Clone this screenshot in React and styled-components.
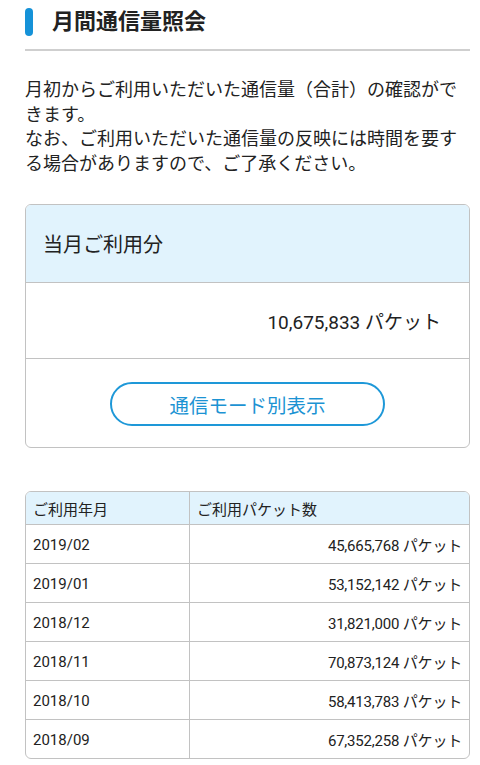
import React from 'react'
import styled, { createGlobalStyle } from 'styled-components'

const GlobalStyle = createGlobalStyle`
  body {
    margin: 0;
    background: #fff;
    font-family: Roboto, "Noto Sans CJK JP", sans-serif;
    color: #222;
  }
`

const Page = styled.div`
  padding: 0 10px 0 25px;
  width: 480px;
  box-sizing: border-box;
`

const Title = styled.h1`
  display: flex;
  align-items: center;
  gap: 19px;
  margin: 0;
  padding: 7px 0 13px;
  font-size: 22px;
  font-weight: 700;
  line-height: 29px;
  border-bottom: 2px solid #cfcfcf;

  &::before {
    content: '';
    width: 8px;
    height: 28px;
    border-radius: 4px;
    background: #1592d8;
  }
`

const Lead = styled.p`
  margin: 27px 0 0;
  font-size: 18px;
  line-height: 24.5px;
`

const Card = styled.section`
  margin-top: 28px;
  border: 1px solid #c2c2c2;
  border-radius: 6px;
  overflow: hidden;
`

const CardHead = styled.div`
  background: #e1f3fd;
  padding: 0 17px;
  height: 77px;
  display: flex;
  align-items: center;
  font-size: 20px;
  border-bottom: 1px solid #c2c2c2;
`

const Amount = styled.div`
  height: 75px;
  display: flex;
  align-items: center;
  justify-content: flex-end;
  padding-right: 28px;
  font-size: 19px;
  border-bottom: 1px solid #c2c2c2;
`

const ButtonRow = styled.div`
  height: 88px;
  display: flex;
  align-items: center;
  justify-content: center;
  padding-top: 2px;
  box-sizing: border-box;
`

const PillButton = styled.button`
  width: 275px;
  height: 44px;
  border: 2px solid #1e98d8;
  border-radius: 22px;
  background: #fff;
  color: #1c93d3;
  font-family: inherit;
  font-size: 19.5px;
  padding: 0;
  cursor: pointer;
`

const Table = styled.table`
  margin-top: 43px;
  width: 100%;
  border-collapse: separate;
  border-spacing: 0;
  border: 1px solid #c2c2c2;
  border-radius: 6px;
  overflow: hidden;
  font-size: 15px;
`

const Th = styled.th`
  background: #e1f3fd;
  font-weight: 400;
  text-align: left;
  height: 32px;
  padding: 0 7px;
  border-left: ${p => (p.$first ? 'none' : '1px solid #c2c2c2')};
  width: ${p => (p.$first ? '149px' : 'auto')};
`

const Td = styled.td`
  box-sizing: border-box;
  height: 39px;
  padding: 1px 7px 0;
  text-align: ${p => (p.$num ? 'right' : 'left')};
  border-top: 1px solid #c2c2c2;
  border-left: ${p => (p.$num ? '1px solid #c2c2c2' : 'none')};
  letter-spacing: ${p => (p.$num ? '-0.2px' : '0')};
`

const rows = [
  ['2019/02', '45,665,768'],
  ['2019/01', '53,152,142'],
  ['2018/12', '31,821,000'],
  ['2018/11', '70,873,124'],
  ['2018/10', '58,413,783'],
  ['2018/09', '67,352,258'],
]

export default function App() {
  return (
    <>
      <GlobalStyle />
      <Page>
        <Title>月間通信量照会</Title>
        <Lead>
          月初からご利用いただいた通信量（合計）の確認ができます。
          <br />
          なお、ご利用いただいた通信量の反映には時間を要する場合がありますので、ご了承ください。
        </Lead>
        <Card>
          <CardHead>当月ご利用分</CardHead>
          <Amount>10,675,833 パケット</Amount>
          <ButtonRow>
            <PillButton>通信モード別表示</PillButton>
          </ButtonRow>
        </Card>
        <Table>
          <thead>
            <tr>
              <Th $first>ご利用年月</Th>
              <Th>ご利用パケット数</Th>
            </tr>
          </thead>
          <tbody>
            {rows.map(([month, packets]) => (
              <tr key={month}>
                <Td>{month}</Td>
                <Td $num>{packets} パケット</Td>
              </tr>
            ))}
          </tbody>
        </Table>
      </Page>
    </>
  )
}
